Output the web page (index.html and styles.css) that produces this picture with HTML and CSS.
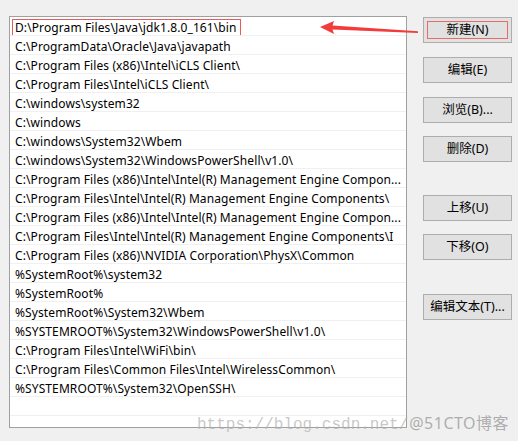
FILE: index.html
```html
<!DOCTYPE html>
<html lang="zh-CN">
<head>
<meta charset="utf-8">
<title>编辑环境变量</title>
<link rel="stylesheet" href="styles.css">
</head>
<body>
<div class="dialog">
  <div class="list">
    <div class="row"><span class="mark">D:\Program Files\Java\jdk1.8.0_161\bin</span></div>
    <div class="row">C:\ProgramData\Oracle\Java\javapath</div>
    <div class="row">C:\Program Files (x86)\Intel\iCLS Client\</div>
    <div class="row">C:\Program Files\Intel\iCLS Client\</div>
    <div class="row">C:\windows\system32</div>
    <div class="row">C:\windows</div>
    <div class="row">C:\windows\System32\Wbem</div>
    <div class="row">C:\windows\System32\WindowsPowerShell\v1.0\</div>
    <div class="row">C:\Program Files (x86)\Intel\Intel(R) Management Engine Compon...</div>
    <div class="row">C:\Program Files\Intel\Intel(R) Management Engine Components\</div>
    <div class="row">C:\Program Files (x86)\Intel\Intel(R) Management Engine Compon...</div>
    <div class="row">C:\Program Files\Intel\Intel(R) Management Engine Components\I</div>
    <div class="row">C:\Program Files (x86)\NVIDIA Corporation\PhysX\Common</div>
    <div class="row">%SystemRoot%\system32</div>
    <div class="row">%SystemRoot%</div>
    <div class="row">%SystemRoot%\System32\Wbem</div>
    <div class="row">%SYSTEMROOT%\System32\WindowsPowerShell\v1.0\</div>
    <div class="row">C:\Program Files\Intel\WiFi\bin\</div>
    <div class="row">C:\Program Files\Common Files\Intel\WirelessCommon\</div>
    <div class="row">%SYSTEMROOT%\System32\OpenSSH\</div>
    <div class="row"></div>
    <div class="row"></div>
  </div>
  <div class="buttons">
    <div class="btn btn-marked">新建(N)</div>
    <div class="btn g14">编辑(E)</div>
    <div class="btn g14">浏览(B)...</div>
    <div class="btn g13">删除(D)</div>
    <div class="btn g33">上移(U)</div>
    <div class="btn g13">下移(O)</div>
    <div class="btn g34">编辑文本(T)...</div>
  </div>
</div>
<svg class="arrow" width="518" height="441" viewBox="0 0 518 441">
  <polygon points="320,27 334,21 332.5,25.6 418,31.2 418,33 332.5,29.4 334,34" fill="#f23c3c"/>
</svg>
<div class="watermark"><span class="wm-url">https://blog.csdn.net/</span><span class="wm-brand">@51CTO博客</span></div>
</body>
</html>
```
FILE: styles.css
```css
html, body {
  margin: 0;
  padding: 0;
}
body {
  width: 518px;
  height: 441px;
  background: #f0f0f0;
  font-family: "Noto Sans", "Noto Sans CJK SC", sans-serif;
  font-size: 12px;
  color: #000;
  overflow: hidden;
  position: relative;
}
.dialog {
  display: flex;
  padding: 16px 0 0 9px;
  gap: 16px;
}
.list {
  width: 398px;
  height: 412px;
  box-sizing: border-box;
  border: 1px solid #a0a0a0;
  background: #fff;
  overflow: hidden;
}
.row {
  height: 19px;
  box-sizing: border-box;
  border-bottom: 1px solid #f0f0f0;
  padding: 2px 0 0 5px;
  line-height: 17px;
  letter-spacing: 0.1px;
  white-space: nowrap;
  overflow: hidden;
}
.mark {
  display: inline-block;
  margin: -1px 0 0 -3px;
  padding: 0 3px 0 2px;
  height: 15px;
  line-height: 15px;
  border: 1px solid #e65a5a;
}
.buttons {
  display: flex;
  flex-direction: column;
  padding-top: 1px;
  width: 89px;
}
.btn {
  height: 26px;
  box-sizing: border-box;
  border: 1px solid #adadad;
  background: #e1e1e1;
  text-align: center;
  line-height: 24px;
  font-size: 12.5px;
}
.btn-marked {
  outline: 1px solid #ea6a6a;
  outline-offset: -5px;
}
.g13 { margin-top: 13px; }
.g14 { margin-top: 14px; }
.g33 { margin-top: 33px; }
.g34 { margin-top: 34px; }
.arrow {
  position: absolute;
  left: 0;
  top: 0;
  pointer-events: none;
}
.watermark {
  position: absolute;
  left: 197px;
  top: 410px;
  white-space: nowrap;
  pointer-events: none;
}
.wm-url {
  font-family: "Liberation Mono", monospace;
  font-size: 16px;
  color: rgba(175, 175, 175, 0.7);
}
.wm-brand {
  font-family: "Noto Sans", "Noto Sans CJK SC", sans-serif;
  font-size: 16px;
  letter-spacing: 0.5px;
  color: rgba(150, 150, 150, 0.75);
  margin-left: 1px;
}
```
